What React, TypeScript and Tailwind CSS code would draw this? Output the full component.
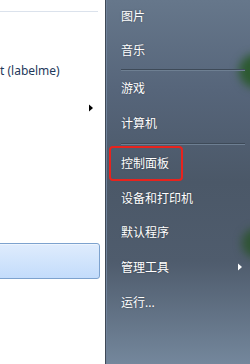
const items = [
  { label: '图片', h: 'h-[33px]' },
  { label: '音乐', h: 'h-[35px]' },
  { sep: true, h: 'h-[3px]' },
  { label: '游戏', h: 'h-[35px]' },
  { label: '计算机', h: 'h-[35px]' },
  { sep: true, h: 'h-[5px]' },
  { label: '控制面板', h: 'h-[35px]', marked: true },
  { label: '设备和打印机', h: 'h-[35px]' },
  { label: '默认程序', h: 'h-[34px]' },
  { label: '管理工具', h: 'h-[35px]', sub: true },
  { label: '运行...', h: 'h-[35px]' },
];

export default function App() {
  return (
    <div className="flex h-[364px] w-[250px] overflow-hidden bg-white text-[12px] font-['Segoe_UI','Noto_Sans','Noto_Sans_CJK_SC',sans-serif]">
      {/* 左侧：程序列表 */}
      <div className="flex w-[105px] shrink-0 flex-col bg-white">
        <div className="mt-[11px] h-px w-[98px] bg-[#dbe2ec]" />
        <div className="mt-[51px] h-[16px] whitespace-nowrap leading-[16px] text-[#1e395b]">t (labelme)</div>
        <div className="mt-[25px] flex h-[8px] w-[93px] justify-end">
          <svg width="4" height="8" viewBox="0 0 4 8" aria-hidden="true">
            <path d="M0 0.5 4 4 0 7.5Z" fill="#000" />
          </svg>
        </div>
        <div className="mt-[131px] h-[36px] w-[103px] -ml-[3px] rounded-[3px] border border-[#7da2ce] bg-[linear-gradient(#dfecfd,#c3dcfb)] shadow-[inset_0_1px_#eef5fe]" />
      </div>

      {/* 右侧：系统链接 */}
      <div className="relative flex flex-1 flex-col border-l border-[#3f4956] bg-[linear-gradient(180deg,#66778b_0%,#56657a_25%,#4b5868_50%,#4f5c6d_72%,#74879c_100%)] pl-[3px] shadow-[inset_1px_0_#70829a]">
        <div className="pointer-events-none absolute left-[133px] top-[54px] h-[34px] w-[34px] rounded-full bg-[#2c5a30] blur-[4px]" />
        <div className="pointer-events-none absolute left-[136px] top-[228px] h-[30px] w-[30px] rounded-full bg-[#2f5434] blur-[4px]" />
        {items.map((it, i) =>
          it.sep ? (
            <div key={i} className={`${it.h} relative flex items-center`}>
              <div className="ml-[12px] w-[124px]">
                <div className="h-px bg-[#3e4a58]" />
                <div className="h-px bg-[#6e7f92]" />
              </div>
            </div>
          ) : (
            <div key={i} className={`${it.h} relative flex items-center text-white [text-shadow:0_0_2px_rgba(0,0,0,0.35)]`}>
              {it.marked ? (
                <div className="flex h-[35px] w-[74px] items-center rounded-[4px] border-2 border-[#e8231d] pl-[10px]">
                  {it.label}
                </div>
              ) : (
                <span className="pl-[12px]">{it.label}</span>
              )}
              {it.sub && (
                <svg className="absolute left-[129px] top-[13px]" width="4" height="8" viewBox="0 0 4 8" aria-hidden="true">
                  <path d="M0 0.5 4 4 0 7.5Z" fill="#fff" />
                </svg>
              )}
            </div>
          )
        )}
      </div>
    </div>
  );
}
